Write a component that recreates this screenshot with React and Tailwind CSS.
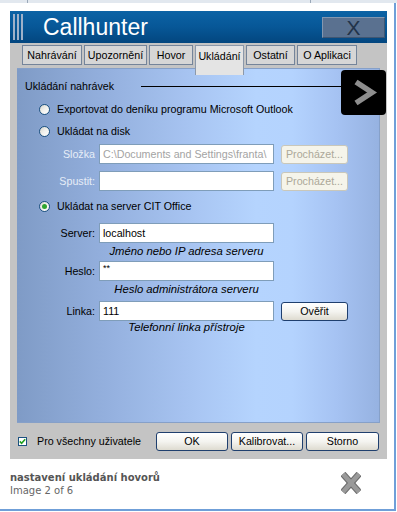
import React from 'react';

const tabs = [
  { label: 'Nahrávání', w: 'w-[60px]' },
  { label: 'Upozornění', w: 'w-[63px]' },
  { label: 'Hovor', w: 'w-[44px]' },
  { label: 'Ukládání', w: 'w-[49px]', active: true },
  { label: 'Ostatní', w: 'w-[49px]' },
  { label: 'O Aplikaci', w: 'w-[60px]' },
];

function Radio({ checked }) {
  return (
    <div className="w-[11px] h-[11px] rounded-full border border-[#1c5180] bg-gradient-to-br from-[#d6d5cc] via-[#f2f2ee] to-white flex items-center justify-center shrink-0">
      {checked && <div className="w-[5px] h-[5px] rounded-full bg-[#2fa52f]" />}
    </div>
  );
}

function XpButton({ children, disabled, className = '' }) {
  return disabled ? (
    <div className={`h-[19px] w-[67px] rounded-[3px] border border-[#c9c7ba] bg-[#f5f4ea] text-[#aca899] flex items-center justify-center ${className}`}>
      {children}
    </div>
  ) : (
    <div className={`h-[19px] rounded-[3px] border border-[#1f3f6e] bg-gradient-to-b from-white via-[#f4f4f0] to-[#dedbd0] text-black flex items-center justify-center ${className}`}>
      {children}
    </div>
  );
}

function FieldRow({ label, value, disabled, valueColor = 'text-black', button, buttonDisabled, className = '' }) {
  return (
    <div className={`flex items-center h-[20px] ${className}`}>
      <div className={`w-[79px] text-right pr-[1px] ${disabled ? 'text-[#e6edf7]' : 'text-black'}`}>{label}</div>
      <div className={`ml-[3px] w-[175px] h-full bg-white border border-[#7f9db9] px-[3px] flex items-center overflow-hidden whitespace-nowrap ${valueColor}`}>
        {value}
      </div>
      {button && <XpButton disabled={buttonDisabled} className="ml-[7px] w-[67px]">{button}</XpButton>}
    </div>
  );
}

function Hint({ children, className = '' }) {
  return (
    <div className={`ml-[82px] w-[175px] h-[14px] flex items-center justify-center italic text-[11.3px] text-black ${className}`}>
      {children}
    </div>
  );
}

export default function App() {
  return (
    <div className="relative w-[397px] h-[512px] bg-white overflow-hidden">
      <div className="h-[3px] bg-[#e2e8ef] flex">
        <div className="ml-[27px] w-px h-full bg-[#9aa8b8]" />
        <div className="ml-[282px] w-px h-full bg-[#9aa8b8]" />
      </div>
      <div className="w-[396px] h-[508px] border-r-2 border-b-2 border-[#6f9fd8] pl-[10px] pt-[8px]">
        {/* dialog */}
        <div className="w-[377px] text-[10.7px] leading-none" style={{ fontFamily: '"Liberation Sans", Arial, sans-serif' }}>
          <div className="h-[32px] bg-gradient-to-b from-[#0c63a5] via-[#075797] to-[#03467f] flex items-center">
            <div className="ml-[3px] flex gap-[2px] h-[26px]">
              <div className="w-[2px] h-full bg-[#9eb1c9]" />
              <div className="w-[2px] h-full bg-[#9eb1c9]" />
              <div className="w-[2px] h-full bg-[#9eb1c9]" />
            </div>
            <div className="ml-[20px] text-[23px] text-white leading-none">Callhunter</div>
            <div className="ml-auto mr-[2px] w-[63px] h-[21px] bg-[#5a7190] border border-t-[#8397b0] border-l-[#8397b0] border-r-[#3f5672] border-b-[#3f5672] flex items-center justify-center text-[21px] text-[#223349]">
              X
            </div>
          </div>

          <div className="bg-[#c4c4c4] px-[7px]">
            {/* tabs */}
            <div className="flex items-start gap-[2px] pl-[5px] pt-[2px] h-[25px]">
              {tabs.map((t) =>
                t.active ? (
                  <div key={t.label} className={`${t.w} h-[30px] relative z-10 bg-[#e4e4e4] border border-b-0 border-[#8b98aa] flex items-start justify-center pt-[5px]`}>
                    {t.label}
                  </div>
                ) : (
                  <div key={t.label} className={`${t.w} h-[20px] bg-[#d6d6d6] border border-[#74849a] flex items-center justify-center`}>
                    {t.label}
                  </div>
                )
              )}
            </div>

            {/* panel */}
            <div className="h-[355px] border-t border-r border-b border-[#86a0c8] bg-[linear-gradient(90deg,#7f9bc6_0%,#94b0de_25%,#a9c6f3_50%,#b5d4fe_66%,#b4d3fe_76%,#a6c3f3_88%,#96b2e1_100%)] text-black">
              <div className="flex items-center h-[14px] mt-[10px] pl-[8px]">
                <span>Ukládání nahrávek</span>
                <div className="ml-[27px] mr-[20px] flex-1 h-px bg-black" />
              </div>
              <div className="flex items-center h-[14px] mt-[9px] pl-[22px] gap-[7px]">
                <Radio />
                <span>Exportovat do deníku programu Microsoft Outlook</span>
              </div>
              <div className="flex items-center h-[14px] mt-[8px] pl-[22px] gap-[7px]">
                <Radio />
                <span>Ukládat na disk</span>
              </div>
              <FieldRow
                className="mt-[6px]"
                label="Složka"
                disabled
                value="C:\Documents and Settings\franta\"
                valueColor="text-[#a3a3a3]"
                button="Procházet..."
                buttonDisabled
              />
              <FieldRow className="mt-[7px]" label="Spustit:" disabled value="" button="Procházet..." buttonDisabled />
              <div className="flex items-center h-[14px] mt-[8px] pl-[22px] gap-[7px]">
                <Radio checked />
                <span>Ukládat na server CIT Office</span>
              </div>
              <FieldRow className="mt-[10px]" label="Server:" value="localhost" />
              <Hint className="mt-[2px]">Jméno nebo IP adresa serveru</Hint>
              <FieldRow className="mt-[2px]" label="Heslo:" value={<span className="self-start mt-[2px] text-[9px]">**</span>} />
              <Hint className="mt-[2px]">Heslo administrátora serveru</Hint>
              <FieldRow className="mt-[4px]" label="Linka:" value="111" button="Ověřit" />
              <Hint>Telefonní linka přístroje</Hint>
            </div>

            {/* bottom bar */}
            <div className="h-[36px] flex items-center">
              <div className="ml-[1px] w-[9px] h-[9px] border border-[#1c5180] bg-white flex items-center justify-center">
                <svg width="7" height="7" viewBox="0 0 7 7">
                  <polyline points="0.8,3.4 2.6,5.3 6.2,1.2" fill="none" stroke="#21a121" strokeWidth="1.6" />
                </svg>
              </div>
              <span className="ml-[10px]">Pro všechny uživatele</span>
              <div className="ml-auto mr-[1px] flex gap-[3px]">
                <XpButton className="w-[72px]">OK</XpButton>
                <XpButton className="w-[72px]">Kalibrovat...</XpButton>
                <XpButton className="w-[73px]">Storno</XpButton>
              </div>
            </div>
          </div>
        </div>

        {/* caption */}
        <div className="flex items-start w-[377px]" style={{ fontFamily: '"DejaVu Sans", Verdana, sans-serif' }}>
          <div className="mt-[12px] text-[10px] leading-[13px] text-[#666]">
            <div className="font-bold text-[#555]">nastavení ukládání hovorů</div>
            <div>Image 2 of 6</div>
          </div>
          <svg className="ml-auto mr-[26px] mt-[13px]" width="20" height="22" viewBox="0 0 20 22">
            <g strokeLinecap="butt">
              <line x1="2" y1="2" x2="18" y2="20" stroke="#6a6a6a" strokeWidth="6.5" />
              <line x1="18" y1="2" x2="2" y2="20" stroke="#6a6a6a" strokeWidth="6.5" />
              <line x1="2" y1="2" x2="18" y2="20" stroke="#9a9a9a" strokeWidth="4.5" />
              <line x1="18" y1="2" x2="2" y2="20" stroke="#9a9a9a" strokeWidth="4.5" />
            </g>
          </svg>
        </div>
      </div>

      {/* lightbox next arrow */}
      <div className="absolute left-[341px] top-[70px] w-[45px] h-[45px] rounded-[4px] bg-black">
        <svg width="45" height="45" viewBox="0 0 45 45">
          <polyline points="15,12 31,22.5 15,33" fill="none" stroke="#8e8e8e" strokeWidth="5.5" strokeLinejoin="miter" />
        </svg>
      </div>
    </div>
  );
}
